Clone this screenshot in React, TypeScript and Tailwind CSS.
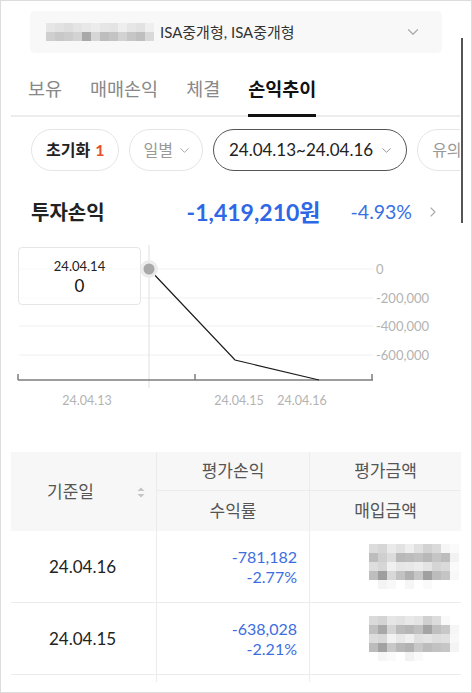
import { ChevronDown, ChevronRight } from "lucide-react";

const FONT = "font-['Lato','Noto_Sans_CJK_KR',sans-serif]";

const accountBlur = [
  ["#e6e6e6", "#e2e2e2", "#dedede", "#e4e4e4", "#e8e8e8", "#ececec", "#e6e6e6", "#e4e4e4", "#eeeeee", "#e6e6e6", "#e2e2e2", "#efefef"],
  ["#cfcfcf", "#c8c8c8", "#cccccc", "#d3d3d3", "#a9a9a9", "#d6d6d6", "#bdbdbd", "#c4c4c4", "#d2d2d2", "#c6c6c6", "#bfbfbf", "#d9d9d9"],
];

const rowBlurA = [
  ["#dcdcdc", "#d6d6d6", "#eaeaea", "#e2e2e2", "#eeeeee", "#e0e0e0", "#d2d2d2", "#dadada", "#f6f6f6", "#fafafa"],
  ["#bdbdbd", "#cfcfcf", "#dcdcdc", "#b9b9b9", "#bcbcbc", "#c1c1c1", "#b8b8b8", "#c5c5c5", "#bdbdbd", "#f2f2f2"],
  ["#dedede", "#d6d6d6", "#f0f0f0", "#e6e6e6", "#e8e8e8", "#ececec", "#e4e4e4", "#d5d5d5", "#dadada", "#fafafa"],
  ["#bebebe", "#9e9e9e", "#d8d8d8", "#c2c2c2", "#b0b0b0", "#c6c6c6", "#a0a0a0", "#bcbcbc", "#c5c5c5", "#f8f8f8"],
  ["#ffffff", "#f4f4f4", "#f8f8f8", "#ffffff", "#f6f6f6", "#ffffff", "#fafafa", "#ffffff", "#ffffff", "#ffffff"],
];

const rowBlurB = [
  ["#dadada", "#d4d4d4", "#e6e6e6", "#e2e2e2", "#e8e8e8", "#e4e4e4", "#d0d0d0", "#dcdcdc", "#fafafa", "#ffffff"],
  ["#c0c0c0", "#a8a8a8", "#d4d4d4", "#bbbbbb", "#b6b6b6", "#c0c0c0", "#a4a4a4", "#bfbfbf", "#c8c8c8", "#f6f6f6"],
  ["#dcdcdc", "#d8d8d8", "#f2f2f2", "#e8e8e8", "#f0f0f0", "#e0e0e0", "#e4e4e4", "#dedede", "#e0e0e0", "#f8f8f8"],
  ["#bcbcbc", "#a2a2a2", "#c8c8c8", "#b8b8b8", "#b2b2b2", "#c8c8c8", "#bcbcbc", "#c2c2c2", "#c6c6c6", "#f4f4f4"],
  ["#ffffff", "#f6f6f6", "#fafafa", "#ffffff", "#f2f2f2", "#fafafa", "#ffffff", "#ffffff", "#ffffff", "#ffffff"],
];

function Mosaic({ cells, size = 9 }: { cells: string[][]; size?: number }) {
  return (
    <div className="flex flex-col">
      {cells.map((row, r) => (
        <div key={r} className="flex">
          {row.map((c, i) => (
            <div key={i} style={{ width: size, height: size, background: c }} />
          ))}
        </div>
      ))}
    </div>
  );
}

const tabs = ["보유", "매매손익", "체결", "손익추이"];

const rows = [
  { date: "24.04.16", pl: "-781,182", rate: "-2.77%", blur: rowBlurA },
  { date: "24.04.15", pl: "-638,028", rate: "-2.21%", blur: rowBlurB },
];

function Chart() {
  return (
    <div className="relative h-[225px]">
      <svg width="470" height="225" className="absolute left-0 top-0">
        {[42, 71, 99, 128].map((y) => (
          <line key={y} x1="18" x2="372" y1={y} y2={y} stroke="#f0f0f0" strokeWidth="1" />
        ))}
        {[
          [42, "0"],
          [71, "-200,000"],
          [99, "-400,000"],
          [128, "-600,000"],
        ].map(([y, t]) => (
          <text
            key={t as string}
            x="375"
            y={(y as number) + 4.5}
            fontSize="13"
            fill="#b3b3b3"
            fontFamily="Lato, sans-serif"
          >
            {t}
          </text>
        ))}
        <line x1="148" x2="148" y1="18" y2="161" stroke="#e4e4e4" strokeWidth="1.2" />
        <line x1="17" x2="372" y1="153" y2="153" stroke="#7d7d7d" strokeWidth="1.5" />
        {[17, 194, 371].map((x) => (
          <line key={x} x1={x} x2={x} y1="147" y2="153" stroke="#7d7d7d" strokeWidth="1.5" />
        ))}
        <polyline
          points="148,42 234,133 318,153"
          fill="none"
          stroke="#1a1a1a"
          strokeWidth="1.2"
        />
        <circle cx="148" cy="42" r="9" fill="#ececec" />
        <circle cx="148" cy="42" r="5.5" fill="#a9a9a9" />
        {[
          [86, "24.04.13"],
          [238, "24.04.15"],
          [301, "24.04.16"],
        ].map(([x, t]) => (
          <text
            key={t as string}
            x={x as number}
            y="178"
            fontSize="12.5"
            fill="#b3b3b3"
            textAnchor="middle"
            fontFamily="Lato, sans-serif"
          >
            {t}
          </text>
        ))}
      </svg>
      <div className="absolute left-[17px] top-[20px] flex h-[58px] w-[123px] flex-col items-center rounded-[4px] border border-[#e6e6e6] bg-white/60 pt-[9px]">
        <div className="text-[13px] leading-[18px] text-[#222]">24.04.14</div>
        <div className="text-[17px] leading-[22px] text-[#111]">0</div>
      </div>
    </div>
  );
}

export default function App() {
  return (
    <div
      className={`relative h-[693px] w-[472px] overflow-hidden border border-[#dcdcdc] bg-white ${FONT}`}
    >
      {/* account selector */}
      <div className="mx-[29px] mt-[10px] flex h-[42px] items-center rounded-[5px] bg-[#f8f8f8] pl-[16px] pr-[20px]">
        <Mosaic cells={accountBlur} />
        <span className="ml-[6px] text-[15px] text-[#333]">ISA중개형, ISA중개형</span>
        <ChevronDown className="ml-auto h-[18px] w-[18px] text-[#aaa]" strokeWidth={1.6} />
      </div>

      {/* tabs */}
      <div className="mx-[10px] mt-[11px] flex h-[53px] w-[449px] items-center gap-[28px] border-b-2 border-[#ececec] pl-[17px]">
        {tabs.map((t) => {
          const active = t === "손익추이";
          return (
            <div
              key={t}
              className={`relative flex h-full items-center text-[18.5px] ${
                active ? "font-bold text-[#111]" : "text-[#888]"
              }`}
            >
              {t}
              {active && <div className="absolute -bottom-[2px] left-0 right-0 h-[3px] bg-[#111]" />}
            </div>
          );
        })}
      </div>

      {/* filter chips */}
      <div className="ml-[30px] mt-[12px] flex h-[42px] w-[429px] gap-[10px] overflow-hidden">
        <div className="flex shrink-0 items-center rounded-full border border-[#e5e5e5] px-[14px] text-[16px] font-bold text-[#222]">
          초기화<span className="ml-[5px] text-[#e5502c]">1</span>
        </div>
        <div className="flex shrink-0 items-center rounded-full border border-[#e5e5e5] pl-[13px] pr-[10px] text-[16px] text-[#999]">
          일별
          <ChevronDown className="ml-[4px] h-[15px] w-[15px] text-[#aaa]" strokeWidth={1.6} />
        </div>
        <div className="flex shrink-0 items-center rounded-full border border-[#555] pl-[15px] pr-[12px] text-[17px] text-[#222]">
          24.04.13~24.04.16
          <ChevronDown className="ml-[6px] h-[15px] w-[15px] text-[#999]" strokeWidth={1.6} />
        </div>
        <div className="flex shrink-0 items-center rounded-full border border-[#e5e5e5] pl-[14px] pr-[14px] text-[16px] text-[#999]">
          유의사항
        </div>
      </div>

      {/* summary */}
      <div className="ml-[30px] mr-[30px] mt-[26px] flex h-[30px] items-center">
        <div className="text-[20px] font-bold text-[#222]">투자손익</div>
        <div className="ml-[82px] text-[23px] font-bold text-[#2f68e6]">-1,419,210원</div>
        <div className="ml-auto text-[19.5px] text-[#3a6fe4]">-4.93%</div>
        <ChevronRight className="ml-[13px] h-[16px] w-[16px] text-[#aaa]" strokeWidth={1.6} />
      </div>

      <Chart />

      {/* table */}
      <div className="ml-[10px] h-[230px] w-[450px] overflow-hidden">
        <div className="grid grid-cols-[146px_153px_151px] bg-[#f7f7f7] text-[17px] text-[#555]">
          <div className="relative row-span-2 flex items-center border-r border-[#ececec] pl-[36px]">
            기준일
            <svg className="absolute right-[11px] top-[35px]" width="8" height="11" viewBox="0 0 8 11">
              <path d="M4 0.5 L7.5 4 L0.5 4 Z" fill="#c4c4c4" />
              <path d="M4 10.5 L7.5 7 L0.5 7 Z" fill="#c4c4c4" />
            </svg>
          </div>
          <div className="flex h-[39px] items-center justify-center border-b border-r border-[#ececec]">
            평가손익
          </div>
          <div className="flex h-[39px] items-center justify-center border-b border-[#ececec]">
            평가금액
          </div>
          <div className="flex h-[40px] items-center justify-center border-r border-[#ececec]">
            수익률
          </div>
          <div className="flex h-[40px] items-center justify-center">매입금액</div>
        </div>
        {rows.map((r) => (
          <div
            key={r.date}
            className="grid h-[72px] grid-cols-[146px_153px_151px] border-b border-[#ececec]"
          >
            <div className="flex items-center border-r border-[#ececec] pl-[38px] text-[17px] text-[#222]">
              {r.date}
            </div>
            <div className="flex flex-col items-end justify-center border-r border-[#ececec] pr-[12px] text-[16px] leading-[20px] text-[#3c6ee0]">
              <div>{r.pl}</div>
              <div>{r.rate}</div>
            </div>
            <div className="flex items-center justify-end pr-[2px]">
              <Mosaic cells={r.blur} />
            </div>
          </div>
        ))}
        <div className="grid h-[72px] grid-cols-[146px_153px_151px]">
          <div className="border-r border-[#ececec]" />
          <div className="border-r border-[#ececec]" />
          <div />
        </div>
      </div>

      {/* scrollbar */}
      <div className="absolute left-[460px] top-[37px] h-[185px] w-[1.5px] bg-[#555]" />
    </div>
  );
}
